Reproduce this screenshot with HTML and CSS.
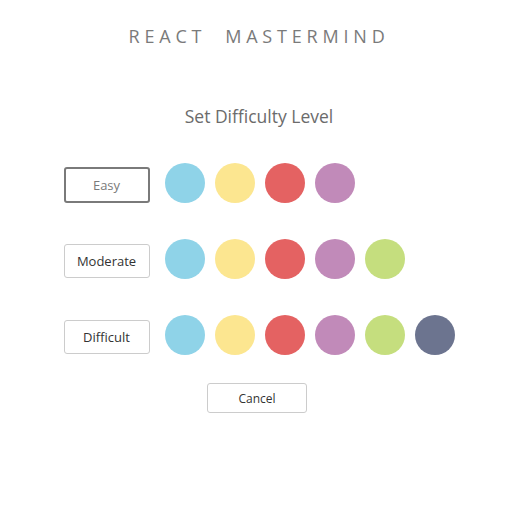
FILE: index.html
```html
<!DOCTYPE html>
<html>
<head>
<meta charset="utf-8">
<link rel="stylesheet" href="styles.css">
</head>
<body>
<div class="app">
  <h1 class="title">REACT&nbsp;&nbsp;MASTERMIND</h1>
  <h2 class="subtitle">Set Difficulty Level</h2>
  <div class="levels">
    <div class="level">
      <button class="btn btn-level selected">Easy</button>
      <div class="pegs">
        <span class="peg blue"></span><span class="peg yellow"></span><span class="peg red"></span><span class="peg purple"></span>
      </div>
    </div>
    <div class="level">
      <button class="btn btn-level">Moderate</button>
      <div class="pegs">
        <span class="peg blue"></span><span class="peg yellow"></span><span class="peg red"></span><span class="peg purple"></span><span class="peg green"></span>
      </div>
    </div>
    <div class="level">
      <button class="btn btn-level">Difficult</button>
      <div class="pegs">
        <span class="peg blue"></span><span class="peg yellow"></span><span class="peg red"></span><span class="peg purple"></span><span class="peg green"></span><span class="peg slate"></span>
      </div>
    </div>
  </div>
  <button class="btn btn-cancel">Cancel</button>
</div>
</body>
</html>
```
FILE: styles.css
```css
html, body {
  margin: 0;
  padding: 0;
  background: #fff;
}
body {
  font-family: "Open Sans", "Noto Sans", sans-serif;
  color: #333;
}
.app {
  display: flex;
  flex-direction: column;
  align-items: center;
  padding-top: 24px;
}
.title {
  margin: 0;
  font-size: 18px;
  font-weight: 400;
  line-height: 24px;
  letter-spacing: 4.8px;
  color: #7a7a7a;
}
.subtitle {
  margin: 56px 0 0;
  font-size: 17.5px;
  font-weight: 400;
  line-height: 24px;
  color: #6b6b6b;
}
.levels {
  display: flex;
  flex-direction: column;
  gap: 36px;
  margin-top: 35px;
  width: 391px;
}
.level {
  display: flex;
  align-items: center;
  gap: 15px;
}
.pegs {
  display: flex;
  gap: 10px;
}
.peg {
  width: 40px;
  height: 40px;
  border-radius: 50%;
  display: block;
}
.blue { background: #8fd3e8; }
.yellow { background: #fce690; }
.red { background: #e46262; }
.purple { background: #c18ab9; }
.green { background: #c5de7e; }
.slate { background: #6c748f; }
.btn {
  font-family: "Open Sans", "Noto Sans", sans-serif;
  background: #fff;
  border: 1px solid #ccc;
  border-radius: 3px;
  color: #333;
  padding: 0;
  cursor: pointer;
}
.btn-level {
  width: 86px;
  height: 34px;
  margin-top: 4px;
  font-size: 13px;
}
.btn-level.selected {
  border: 2px solid #7a7a7a;
  color: #7a7a7a;
  height: 36px;
}
.btn-cancel {
  margin-top: 28px;
  margin-right: 4px;
  width: 100px;
  height: 30px;
  font-size: 12px;
}
```
